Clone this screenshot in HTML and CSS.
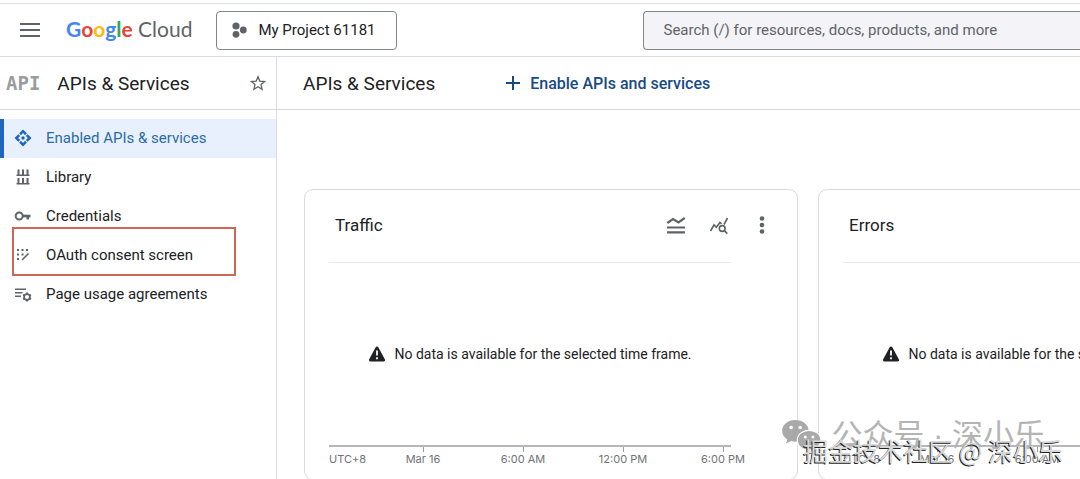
FILE: index.html
```html
<!DOCTYPE html>
<html lang="en">

<head>
    <meta charset="UTF-8">
    <meta name="viewport" content="width=device-width, initial-scale=1.0">
    <title>APIs &amp; Services - Google Cloud</title>
    <link rel="stylesheet" href="styles.css">
</head>

<body>
    <header class="topbar">
        <button class="icon-btn menu-btn" type="button" aria-label="Main menu">
            <svg width="20" height="14" viewBox="0 0 20 14"><path d="M0 1h20M0 7h20M0 13h20" stroke="#5f6368" stroke-width="2"/></svg>
        </button>
        <a class="logo" href="#"><span class="blue">G</span><span class="red">o</span><span class="yellow">o</span><span class="blue">g</span><span class="green">l</span><span class="red">e</span> Cloud</a>
        <button class="project-btn" type="button">
            <svg width="15" height="16" viewBox="0 0 15 16" fill="#5f6368"><circle cx="4" cy="4" r="3.6"/><circle cx="11.3" cy="8" r="3.4"/><circle cx="4" cy="12.3" r="3.4"/></svg>
            My Project 61181
        </button>
        <input class="search" type="search" aria-label="Search" placeholder="Search (/) for resources, docs, products, and more">
    </header>

    <div class="layout">
        <aside class="sidebar">
            <div class="side-title">
                <span class="api-icon">API</span>
                <h2>APIs &amp; Services</h2>
                <button class="icon-btn" type="button" aria-label="Pin product">
                    <svg width="16" height="16" viewBox="0 0 16 16" fill="none" stroke="#5f6368" stroke-width="1.3"><path d="M8 1.7l1.8 4.4 4.8.4-3.6 3.1 1.1 4.7L8 11.800l-4.100 2.500L5 9.600 1.400 6.500l4.800-.4z"/></svg>
                </button>
            </div>
            <nav class="nav">
                <a class="nav-item active" href="#">
                    <svg width="18" height="18" viewBox="0 0 18 18" fill="#1f66c1"><path d="M9 .5l3.800 3.800-1.700 1.900L9 4.100 6.900 6.200 5.200 4.300z"/><path d="M9 17.500l3.800-3.800-1.700-1.900L9 13.900l-2.100-2.100-1.700 1.900z"/><path d="M.5 9l3.800-3.800 1.900 1.700L4.100 9l2.100 2.100-1.900 1.700z"/><path d="M17.500 9l-3.800-3.800-1.900 1.700L13.900 9l-2.100 2.100 1.900 1.700z"/><circle cx="9" cy="9" r="1.700"/></svg>
                    Enabled APIs &amp; services
                </a>
                <a class="nav-item" href="#">
                    <svg width="18" height="18" viewBox="0 0 18 18" stroke="#5f6368"><path d="M2.500 7.300h13M2.500 15.800h13" stroke-width="1.400"/><path d="M4.500 1.500v5.500M9 1.500v5.500M13.500 1.500v5.500M4.500 10v5.500M9 10v5.500M13.500 10v5.500" stroke-width="2"/></svg>
                    Library
                </a>
                <a class="nav-item" href="#">
                    <svg width="18" height="18" viewBox="0 0 18 18" fill="none" stroke="#5f6368" stroke-width="2"><circle cx="5.200" cy="9" r="3.500"/><path d="M8.500 9h8" stroke-width="2.600"/><path d="M13.800 9v3.400" stroke-width="2.600"/></svg>
                    Credentials
                </a>
                <a class="nav-item marked" href="#">
                    <svg width="18" height="18" viewBox="0 0 18 18" fill="#5f6368"><path d="M3 3h2v2H3zM7.500 3h2v2h-2zM12 3h2v2h-2zM3 7.500h2v2H3zM7.500 7.500h2v2h-2zM3 12h2v2H3z"/><path d="M8 14l6.500-6.500" stroke="#5f6368" stroke-width="1.600"/></svg>
                    OAuth consent screen
                </a>
                <a class="nav-item" href="#">
                    <svg width="18" height="18" viewBox="0 0 18 18" fill="none" stroke="#5f6368"><path d="M1 4.200h11M1 7.700h7.500M1 11.200h6" stroke-width="1.500"/><circle cx="13" cy="12" r="2.900" stroke-width="1.700"/><path d="M13 7.500v1.600M13 14.900v1.600M9.100 9.800l1.400.8M15.500 13.400l1.400.8M9.100 14.200l1.400-.8M15.500 10.600l1.400-.8" stroke-width="1.800"/></svg>
                    Page usage agreements
                </a>
            </nav>
        </aside>

        <main class="main">
            <div class="page-title">
                <h1>APIs &amp; Services</h1>
                <button class="enable-btn" type="button">
                    <svg width="16" height="16" viewBox="0 0 16 16"><path d="M8 1v14M1 8h14" stroke="#174a84" stroke-width="2"/></svg>
                    Enable APIs and services
                </button>
            </div>

            <div class="cards">
                <section class="card">
                    <div class="card-head">
                        <h3>Traffic</h3>
                        <div class="tools">
                            <button class="icon-btn" type="button" aria-label="Legend">
                                <svg width="20" height="20" viewBox="0 0 20 20" fill="none" stroke="#5f6368" stroke-width="2.200"><path d="M1 17.300h18M1 12.500h18"/><path d="M1.300 8L7 4l5.500 3.500L18.700 3"/></svg>
                            </button>
                            <button class="icon-btn" type="button" aria-label="Explore data">
                                <svg width="20" height="20" viewBox="0 0 20 20" fill="none" stroke="#5f6368" stroke-width="1.600"><path d="M1.500 16L5 9.800l2.300 2.400L11 7.500l1.500 1.400M15 9.500L18.500 3"/><circle cx="13.200" cy="13.500" r="2.900"/><path d="M15.300 15.600l3 3"/></svg>
                            </button>
                            <button class="icon-btn" type="button" aria-label="More options">
                                <svg width="20" height="20" viewBox="0 0 20 20" fill="#5f6368"><circle cx="10" cy="3.500" r="2.300"/><circle cx="10" cy="10" r="2.300"/><circle cx="10" cy="16.500" r="2.300"/></svg>
                            </button>
                        </div>
                    </div>
                    <div class="chart">
                        <p class="no-data">
                            <svg width="18" height="16" viewBox="0 0 18 16"><path d="M9 2l6.500 12h-13z" fill="#202124" stroke="#202124" stroke-width="3" stroke-linejoin="round"/><path d="M9 4.500v5M9 11.300v2" stroke="#fff" stroke-width="1.800"/></svg>
                            No data is available for the selected time frame.
                        </p>
                    </div>
                    <div class="axis">
                        <span class="zone">UTC+8</span><span>Mar 16</span><span>6:00 AM</span><span>12:00 PM</span><span>6:00 PM</span>
                    </div>
                </section>

                <section class="card">
                    <div class="card-head">
                        <h3>Errors</h3>
                    </div>
                    <div class="chart">
                        <p class="no-data">
                            <svg width="18" height="16" viewBox="0 0 18 16"><path d="M9 2l6.500 12h-13z" fill="#202124" stroke="#202124" stroke-width="3" stroke-linejoin="round"/><path d="M9 4.500v5M9 11.300v2" stroke="#fff" stroke-width="1.800"/></svg>
                            No data is available for the selected time frame.
                        </p>
                    </div>
                    <div class="axis">
                        <span class="zone">UTC+8</span><span>Mar 16</span><span>6:00 AM</span><span>12:00 PM</span><span>6:00 PM</span>
                    </div>
                </section>
            </div>
        </main>
    </div>

    <div class="watermark account" lang="zh-CN">
        <svg width="42" height="34" viewBox="0 0 44 36"><path d="M15 1C7 1 1 6 1 12.500c0 4 2 7 5.500 9.200L5 26l5.500-2.600c1.500.4 3 .6 4.500.6 8 0 14-5 14-11.500S23 1 15 1z" fill="#a9a9a9"/><path d="M29.500 12C22.500 12 17 16.500 17 22.500S22.500 33 29.500 33c1.500 0 2.800-.2 4-.5L38 35l-1.200-3.900C40 29 42 26 42 22.500 42 16.500 36.500 12 29.500 12z" fill="#a9a9a9" stroke="#fff" stroke-width="1.200"/><g fill="#fff"><circle cx="10.500" cy="9" r="1.900"/><circle cx="20" cy="9" r="1.900"/><circle cx="25.500" cy="19" r="1.600"/><circle cx="33.500" cy="19" r="1.600"/></g></svg>
        公众号 · 深小乐
    </div>
    <div class="watermark community" lang="zh-CN">掘金技术社区 @ 深小乐</div>
</body>

</html>
```
FILE: styles.css
```css
* {
    margin: 0;
    padding: 0;
    box-sizing: border-box;
}

body {
    position: relative;
    min-height: 100vh;
    font-family: Roboto, sans-serif;
    font-size: 15px;
    color: #202124;
    background: #fff;
    overflow: hidden;
}

a {
    color: inherit;
    text-decoration: none;
}

button {
    font: inherit;
    color: inherit;
    background: none;
    border: none;
    cursor: pointer;
}

svg {
    display: block;
    flex: none;
}

h1,
h2 {
    font-size: 19px;
    font-weight: 400;
    white-space: nowrap;
}

h3 {
    font-size: 17px;
    font-weight: 400;
}

/* top bar */
.topbar {
    display: flex;
    align-items: center;
    height: 57px;
    padding: 4px 0 0 20px;
    border-bottom: 1px solid #dadce0;
    background: linear-gradient(#e3e3e6, #e3e3e6) 0 3px / 100% 1px no-repeat;
}

.logo {
    margin: 0 24px 0 26px;
    padding-bottom: 3px;
    font-family: Lato, sans-serif;
    font-size: 21px;
    color: #5f6368;
    white-space: nowrap;
}

.blue {
    color: #4285f4;
}

.red {
    color: #ea4335;
}

.yellow {
    color: #fbbc04;
}

.green {
    color: #34a853;
}

.logo .blue,
.logo .red,
.logo .yellow,
.logo .green {
    font-weight: 700;
}

.project-btn {
    display: flex;
    align-items: center;
    gap: 11px;
    height: 39px;
    padding: 0 20px 0 15px;
    border: 1px solid #80868b;
    border-radius: 4px;
    white-space: nowrap;
}

.search {
    flex: 1;
    min-width: 0;
    height: 39px;
    margin-left: 246px;
    padding: 0 20px;
    border: 1px solid #80868b;
    border-right: none;
    border-radius: 4px 0 0 4px;
    background: #f3f3f8;
    font: inherit;
}

.search::placeholder {
    color: #5f6368;
}

/* sidebar */
.layout {
    display: flex;
}

.sidebar {
    flex: none;
    width: 277px;
    min-height: calc(100vh - 57px);
    border-right: 1px solid #dadce0;
}

.side-title,
.page-title {
    display: flex;
    align-items: center;
    height: 53px;
    border-bottom: 1px solid #dadce0;
}

.side-title {
    padding: 0 10px 0 6px;
}

.side-title h2 {
    flex: 1;
    margin-left: 17px;
}

.api-icon {
    font-family: "DejaVu Sans Mono", monospace;
    font-size: 19px;
    font-weight: 700;
    color: #9a9da0;
}

.nav {
    padding-top: 9px;
}

.nav-item {
    position: relative;
    display: flex;
    align-items: center;
    gap: 14px;
    height: 39px;
    padding: 0 0 2px 14px;
}

.nav-item.active {
    color: #2b6ca3;
    background: #e8f0fe;
    box-shadow: inset 4px 0 #1f66c1;
}

/* callout frame around the entry */
.nav-item.marked::after {
    content: "";
    position: absolute;
    inset: -9px 40px -1px 12px;
    border: 2px solid #cc6655;
}

/* main */
.main {
    flex: 1;
    min-width: 0;
    overflow: hidden;
}

.page-title {
    gap: 70px;
    padding-left: 26px;
}

.enable-btn {
    display: flex;
    align-items: center;
    gap: 9px;
    font-size: 16px;
    font-weight: 500;
    color: #174a84;
    white-space: nowrap;
}

.cards {
    display: grid;
    grid-template-columns: repeat(2, minmax(494px, 1fr));
    gap: 20px;
    padding: 79px 27px 0;
}

.card {
    padding: 0 24px;
    border: 1px solid #dadce0;
    border-radius: 9px;
}

.card-head {
    display: flex;
    align-items: center;
    justify-content: space-between;
    height: 72px;
    padding: 0 1px 2px 6px;
}

.tools {
    display: flex;
    gap: 23px;
}

.chart {
    display: flex;
    align-items: center;
    justify-content: center;
    height: 185px;
    margin-right: 42px;
    border-top: 1px solid #e8eaed;
    border-bottom: 2px solid #b4b6b9;
}

.no-data {
    display: flex;
    gap: 8px;
    font-size: 14px;
    white-space: nowrap;
}

.axis {
    display: grid;
    grid-template-columns: 44px repeat(4, 1fr);
    height: 32px;
    font-family: Inter, sans-serif;
    font-size: 11px;
    line-height: 15px;
    color: #6f7377;
    text-align: center;
    white-space: nowrap;
}

.axis span::before {
    content: "";
    display: block;
    width: 1px;
    height: 5px;
    margin: 0 auto;
    background: #9a9da0;
}

.axis .zone {
    text-align: left;
}

.axis .zone::before {
    background: none;
}

/* watermarks over the page */
.watermark {
    position: absolute;
    font-family: "Noto Sans CJK SC", sans-serif;
    white-space: nowrap;
}

.account {
    right: 35px;
    bottom: 22px;
    display: flex;
    align-items: center;
    gap: 8px;
    font-family: "Liberation Sans", "Noto Sans CJK SC", sans-serif;
    font-size: 31px;
    line-height: 44px;
    color: #b4b4b4;
}

.community {
    right: 17px;
    bottom: 12px;
    font-size: 25px;
    line-height: 36px;
    color: #d8d8d8;
    text-shadow: -1px 1px 0 #222;
}
```
